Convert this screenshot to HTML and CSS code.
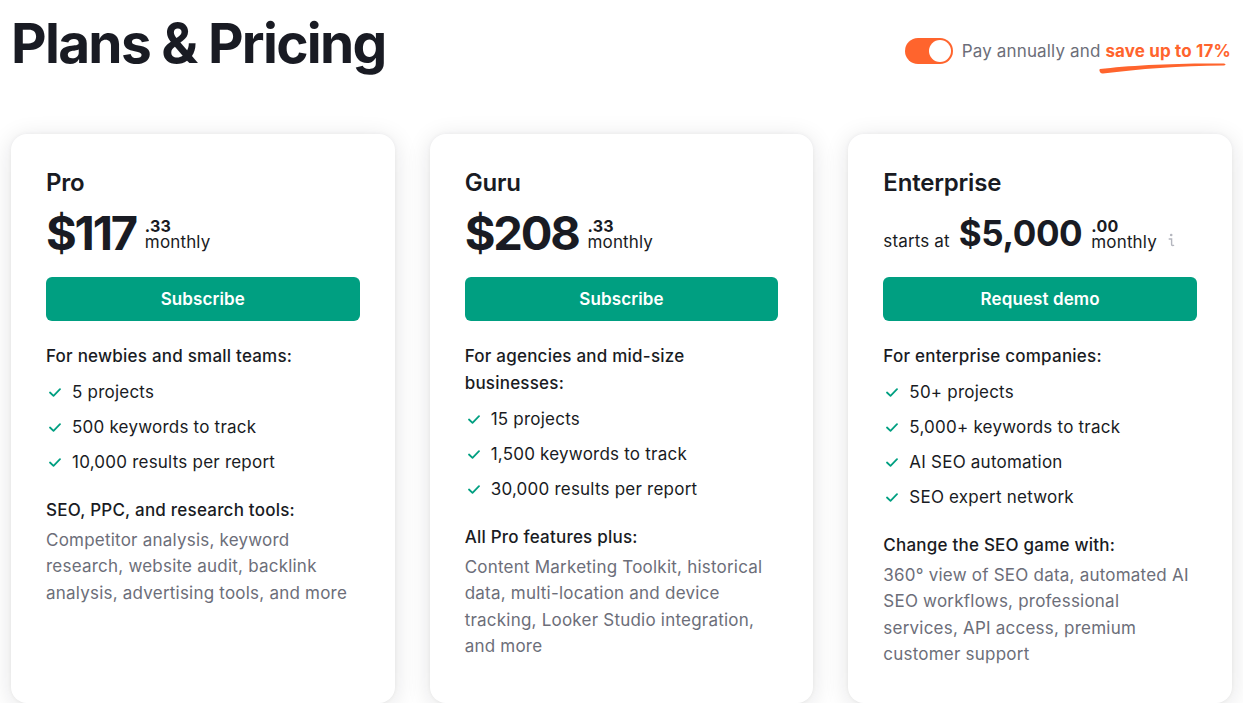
FILE: index.html
```html
<!DOCTYPE html>
<html lang="en">
<head>
<meta charset="utf-8">
<title>Plans &amp; Pricing</title>
<link rel="stylesheet" href="styles.css">
</head>
<body>
<div class="page">
  <header class="top">
    <h1 class="title">Plans &amp; Pricing</h1>
    <div class="billing">
      <span class="toggle"><span class="knob"></span></span>
      <span class="billing-text">Pay annually and <span class="save">save up to 17%<svg class="brush" width="128" height="12" viewBox="0 0 128 12"><path d="M1 7 C 30 3.5, 75 1, 125 1.5 C 127 1.8, 127 3.4, 125 3.5 C 80 4, 40 7, 4 11.5 C 1 11.8, -0.5 8, 1 7 Z" fill="#ff642d"/></svg></span></span>
    </div>
  </header>

  <main class="plans">
    <section class="card">
      <h2 class="plan-name">Pro</h2>
      <div class="price-row">
        <span class="amount">$117</span>
        <span class="cents-col"><span class="cents">.33</span><span class="period">monthly</span></span>
      </div>
      <a class="btn">Subscribe</a>
      <p class="for">For newbies and small teams:</p>
      <ul class="checks">
        <li><svg class="check" viewBox="0 0 12 9" width="12" height="9"><path d="M1 4.5 L4.5 7.8 L11 1.2" fill="none" stroke="#009f81" stroke-width="1.8" stroke-linecap="round" stroke-linejoin="round"/></svg>5 projects</li>
        <li><svg class="check" viewBox="0 0 12 9" width="12" height="9"><path d="M1 4.5 L4.5 7.8 L11 1.2" fill="none" stroke="#009f81" stroke-width="1.8" stroke-linecap="round" stroke-linejoin="round"/></svg>500 keywords to track</li>
        <li><svg class="check" viewBox="0 0 12 9" width="12" height="9"><path d="M1 4.5 L4.5 7.8 L11 1.2" fill="none" stroke="#009f81" stroke-width="1.8" stroke-linecap="round" stroke-linejoin="round"/></svg>10,000 results per report</li>
      </ul>
      <p class="for extra">SEO, PPC, and research tools:</p>
      <p class="desc">Competitor analysis, keyword research, website audit, backlink analysis, advertising tools, and more</p>
    </section>

    <section class="card">
      <h2 class="plan-name">Guru</h2>
      <div class="price-row">
        <span class="amount">$208</span>
        <span class="cents-col"><span class="cents">.33</span><span class="period">monthly</span></span>
      </div>
      <a class="btn">Subscribe</a>
      <p class="for">For agencies and mid-size businesses:</p>
      <ul class="checks">
        <li><svg class="check" viewBox="0 0 12 9" width="12" height="9"><path d="M1 4.5 L4.5 7.8 L11 1.2" fill="none" stroke="#009f81" stroke-width="1.8" stroke-linecap="round" stroke-linejoin="round"/></svg>15 projects</li>
        <li><svg class="check" viewBox="0 0 12 9" width="12" height="9"><path d="M1 4.5 L4.5 7.8 L11 1.2" fill="none" stroke="#009f81" stroke-width="1.8" stroke-linecap="round" stroke-linejoin="round"/></svg>1,500 keywords to track</li>
        <li><svg class="check" viewBox="0 0 12 9" width="12" height="9"><path d="M1 4.5 L4.5 7.8 L11 1.2" fill="none" stroke="#009f81" stroke-width="1.8" stroke-linecap="round" stroke-linejoin="round"/></svg>30,000 results per report</li>
      </ul>
      <p class="for extra">All Pro features plus:</p>
      <p class="desc">Content Marketing Toolkit, historical data, multi-location and device tracking, Looker Studio integration, and more</p>
    </section>

    <section class="card">
      <h2 class="plan-name">Enterprise</h2>
      <div class="price-row">
        <span class="starts">starts at</span>
        <span class="amount small">$5,000</span>
        <span class="cents-col"><span class="cents">.00</span><span class="period">monthly</span></span>
        <svg class="info" width="8" height="14" viewBox="0 0 8 14"><circle cx="4.2" cy="2" r="1.3" fill="#b4b6be"/><path d="M2.2 6 H4.6 V11.6 C4.6 12.4 5.2 12.6 6.6 12.4" fill="none" stroke="#b4b6be" stroke-width="1.4" stroke-linecap="round"/></svg>
      </div>
      <a class="btn">Request demo</a>
      <p class="for">For enterprise companies:</p>
      <ul class="checks">
        <li><svg class="check" viewBox="0 0 12 9" width="12" height="9"><path d="M1 4.5 L4.5 7.8 L11 1.2" fill="none" stroke="#009f81" stroke-width="1.8" stroke-linecap="round" stroke-linejoin="round"/></svg>50+ projects</li>
        <li><svg class="check" viewBox="0 0 12 9" width="12" height="9"><path d="M1 4.5 L4.5 7.8 L11 1.2" fill="none" stroke="#009f81" stroke-width="1.8" stroke-linecap="round" stroke-linejoin="round"/></svg>5,000+ keywords to track</li>
        <li><svg class="check" viewBox="0 0 12 9" width="12" height="9"><path d="M1 4.5 L4.5 7.8 L11 1.2" fill="none" stroke="#009f81" stroke-width="1.8" stroke-linecap="round" stroke-linejoin="round"/></svg>AI SEO automation</li>
        <li><svg class="check" viewBox="0 0 12 9" width="12" height="9"><path d="M1 4.5 L4.5 7.8 L11 1.2" fill="none" stroke="#009f81" stroke-width="1.8" stroke-linecap="round" stroke-linejoin="round"/></svg>SEO expert network</li>
      </ul>
      <p class="for extra">Change the SEO game with:</p>
      <p class="desc">360° view of SEO data, automated AI SEO workflows, professional services, API access, premium customer support</p>
    </section>
  </main>
</div>
</body>
</html>
```

FILE: styles.css
```css
* { box-sizing: border-box; }
html, body { margin: 0; padding: 0; background: #ffffff; }
body {
  font-family: Inter, "Noto Sans", "Liberation Sans", sans-serif;
  color: #191b23;
  font-size: 17px;
  line-height: 26px;
  letter-spacing: 0.22px;
}
.page { padding: 0 11px; }

.top {
  display: flex;
  justify-content: space-between;
  align-items: flex-start;
  height: 134px;
}
.title {
  margin: 0;
  padding-top: 7px;
  font-size: 55px;
  line-height: 72px;
  font-weight: 700;
  letter-spacing: -1.7px;
  color: #191b23;
}
.billing {
  display: flex;
  align-items: center;
  gap: 9px;
  margin-top: 38px;
  margin-right: 1px;
}
.toggle {
  width: 48px;
  height: 26px;
  border-radius: 13px;
  background: #ff642d;
  display: flex;
  align-items: center;
  justify-content: flex-end;
  padding: 2px;
}
.knob {
  width: 22px;
  height: 22px;
  border-radius: 50%;
  background: #ffffff;
}
.billing-text {
  color: #6c6e79;
  line-height: 26px;
  letter-spacing: 0.15px;
}
.save {
  position: relative;
  color: #ff642d;
  font-weight: 700;
}
.brush {
  position: absolute;
  left: -6px;
  top: 21px;
}

.plans {
  display: grid;
  grid-template-columns: repeat(3, 1fr);
  gap: 35px;
}
.card {
  background: #ffffff;
  border-radius: 16px;
  box-shadow: 0 4px 24px rgba(25, 27, 35, 0.12), 0 0 4px rgba(25, 27, 35, 0.05);
  padding: 32px 35px 35px;
  display: flex;
  flex-direction: column;
}
.plan-name {
  margin: 0;
  font-size: 24px;
  line-height: 34px;
  font-weight: 600;
  letter-spacing: -0.2px;
}
.price-row {
  display: flex;
  align-items: center;
  height: 56px;
  margin-top: 5px;
}
.amount {
  font-size: 47px;
  line-height: 56px;
  font-weight: 700;
  letter-spacing: -2.2px;
}
.amount.small {
  font-size: 35px;
  letter-spacing: -0.4px;
  margin-left: 9px;
}
.starts {
  line-height: 20px;
  margin-top: 15px;
  letter-spacing: 0.15px;
}
.cents-col {
  display: flex;
  flex-direction: column;
  margin-left: 9px;
  margin-top: 3px;
}
.cents {
  font-size: 16px;
  font-weight: 700;
  line-height: 16px;
}
.period {
  line-height: 17px;
  letter-spacing: 0.15px;
}
.info { margin-left: 10px; margin-top: 14px; }

.btn {
  display: flex;
  align-items: center;
  justify-content: center;
  height: 44px;
  margin-top: 16px;
  border-radius: 6px;
  background: #009f81;
  color: #ffffff;
  font-weight: 600;
  letter-spacing: 0.1px;
}
.for {
  margin: 22px 0 0;
  font-weight: 500;
  line-height: 27px;
}
.checks {
  list-style: none;
  margin: 9px 0 0;
  padding: 0;
  display: flex;
  flex-direction: column;
  gap: 9px;
}
.checks li {
  display: flex;
  align-items: center;
  height: 26px;
}
.check { margin: 0 11px 0 3px; flex: none; }
.for.extra { margin-top: 22px; }
.desc {
  margin: 3px 0 0;
  color: #6c6e79;
  line-height: 26.4px;
}
```
